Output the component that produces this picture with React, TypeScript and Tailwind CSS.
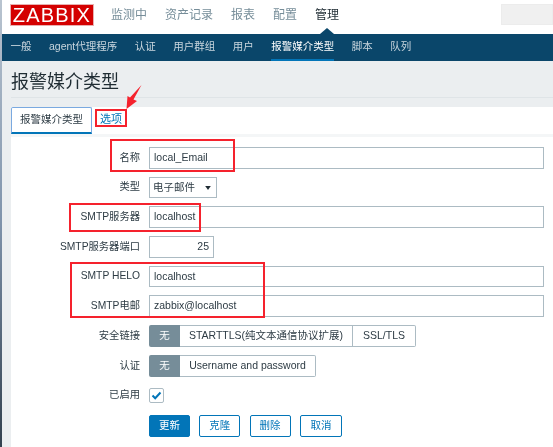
const cjk = "font-['Liberation_Sans','Noto_Sans_CJK_SC',sans-serif]";

function Row({ label, children, className = "" }: { label: string; children: React.ReactNode; className?: string }) {
  return (
    <div className={`flex items-center gap-[9px] h-[21.7px] ${className}`}>
      <div className="w-[129px] text-right text-[10.3px] leading-none text-[#2d3b44] whitespace-nowrap">{label}</div>
      {children}
    </div>
  );
}

function Field({ value, w = "flex-1", right = false }: { value: string; w?: string; right?: boolean }) {
  return (
    <div className={`h-full ${w} border border-[#acbbc3] bg-white flex items-center px-[4px] text-[10.5px] text-[#2d3b44] ${right ? "justify-end" : ""}`}>
      {value}
    </div>
  );
}

function Segments({ items }: { items: { t: string; w: string }[] }) {
  return (
    <div className="h-full flex">
      <div className="w-[31px] h-full bg-[#768d99] text-white text-[10.5px] flex items-center justify-center rounded-l-[2px]">无</div>
      {items.map((i) => (
        <div key={i.t} className={`${i.w} h-full border border-l-0 border-[#acbbc3] last:rounded-r-[2px] text-[10.5px] text-[#2d3b44] flex items-center justify-center whitespace-nowrap`}>
          {i.t}
        </div>
      ))}
    </div>
  );
}

function Btn({ t, w }: { t: string; w: string }) {
  return (
    <div className={`${w} h-full border border-[#0275b8] rounded-[2px] text-[#0275b8] text-[10.5px] flex items-center justify-center`}>{t}</div>
  );
}

export default function App() {
  const menu = [
    { t: "监测中" },
    { t: "资产记录" },
    { t: "报表" },
    { t: "配置" },
    { t: "管理", on: true },
  ];
  const nav = ["一般", "agent代理程序", "认证", "用户群组", "用户", "报警媒介类型", "脚本", "队列"];
  return (
    <div className={`relative w-[553px] h-[447px] overflow-hidden flex bg-white blur-[0.4px] ${cjk}`}>
      <div className="w-[2px] h-full shrink-0 bg-gradient-to-b from-[#b9c4d0] via-[#7f93ab] to-[#33414f]" />
      <div className="flex-1 min-w-0 flex flex-col bg-[#ebeef0]">
        {/* top bar */}
        <div className="h-[34px] bg-white flex relative shrink-0">
          <div className="ml-[8px] mt-[4px] w-[84px] h-[22px] bg-[#d40000] border border-[#e8b0b0] flex items-center justify-center text-white text-[20px] leading-none tracking-[1.2px] font-['Liberation_Sans',sans-serif]">
            ZABBIX
          </div>
          <div className="ml-[17px] mt-[8px] flex gap-[18px] h-[14px] text-[12px] leading-[14px]">
            {menu.map((m) => (
              <span key={m.t} className={m.on ? "text-[#1f2c33]" : "text-[#768d99]"}>{m.t}</span>
            ))}
          </div>
          <div className="absolute left-[499px] top-[4px] right-0 h-[21px] bg-[#f0f0f0] border border-[#ececec]" />
          <div className="absolute left-[318px] top-[28px] w-0 h-0 border-l-[7px] border-r-[7px] border-b-[6px] border-l-transparent border-r-transparent border-b-[#0a466a]" />
        </div>
        {/* sub nav */}
        <div className="h-[27px] bg-[#0a466a] shrink-0 flex pl-[8.500px] gap-[17.500px] text-[10.5px]">
          {nav.map((n, i) => (
            <div key={n} className={`h-full flex items-center whitespace-nowrap border-b-2 ${i === 5 ? "border-[#0275b8] text-white" : "border-transparent text-[#c9d6de]"}`}>
              {n}
            </div>
          ))}
        </div>
        {/* title */}
        <div className="mx-[9px] mr-0 h-[37px] shrink-0 border-b border-[#dfe4e7] flex items-center pt-[5px]">
          <h1 className="text-[18px] leading-none text-[#1f2c33] font-normal">报警媒介类型</h1>
        </div>
        {/* card */}
        <div className="ml-[9px] mt-[9px] flex-1 bg-white flex flex-col min-h-0">
          <div className="h-[27px] flex shrink-0">
            <div className="w-[81px] h-full rounded-t-[2px] border border-[#7aa9e0] border-b-2 border-b-[#0275b8] flex items-center justify-center text-[10.5px] text-[#2d3b44]">报警媒介类型</div>
            <div className="pl-[8px] h-[20px] mt-[2px] flex items-center text-[11px] text-[#0275b8]">选项</div>
          </div>
          <div className="h-[3px] bg-[#f4f6f7] shrink-0" />
          <div className="pt-[10px] pr-[9px] flex flex-col gap-[8px]">
            <Row label="名称"><Field value="local_Email" /></Row>
            <Row label="类型">
              <div className="h-full w-[68px] border border-[#acbbc3] flex items-center justify-between pl-[3px] pr-[5px] text-[10.5px] text-[#2d3b44]">
                电子邮件
                <svg width="6" height="4" viewBox="0 0 7 5"><path d="M0 0h7L3.500 5z" fill="#1f2c33" /></svg>
              </div>
            </Row>
            <Row label="SMTP服务器"><Field value="localhost" /></Row>
            <Row label="SMTP服务器端口"><Field value="25" w="w-[65px]" right /></Row>
            <Row label="SMTP HELO"><Field value="localhost" /></Row>
            <Row label="SMTP电邮"><Field value="zabbix@localhost" /></Row>
            <Row label="安全链接">
              <Segments items={[{ t: "STARTTLS(纯文本通信协议扩展)", w: "w-[173px]" }, { t: "SSL/TLS", w: "w-[63px]" }]} />
            </Row>
            <Row label="认证">
              <Segments items={[{ t: "Username and password", w: "w-[136px]" }]} />
            </Row>
            <Row label="已启用">
              <div className="w-[15px] h-[15px] border border-[#acbbc3] rounded-[2px] flex items-center justify-center">
                <svg width="11" height="9" viewBox="0 0 11 9" fill="none"><path d="M1.500 4.500 4.200 7.200 9.500 1.500" stroke="#0275b8" strokeWidth="2" /></svg>
              </div>
            </Row>
            <div className="flex h-[21.7px] ml-[138px] gap-[9.300px] mt-[1px]">
              <div className="w-[41px] h-full bg-[#0275b8] border border-[#0275b8] rounded-[2px] text-white text-[10.5px] flex items-center justify-center">更新</div>
              <Btn t="克隆" w="w-[41px]" />
              <Btn t="删除" w="w-[41px]" />
              <Btn t="取消" w="w-[42px]" />
            </div>
          </div>
        </div>
      </div>
      {/* red annotations drawn over the screenshot */}
      <div className="absolute left-[95px] top-[109px] w-[32px] h-[18px] border-2 border-[#f5222d]" />
      <div className="absolute left-[110px] top-[139px] w-[125px] h-[33px] border-2 border-[#f5222d]" />
      <div className="absolute left-[69px] top-[203px] w-[132px] h-[29px] border-2 border-[#f5222d]" />
      <div className="absolute left-[70px] top-[262px] w-[195px] h-[56px] border-2 border-[#f5222d]" />
      <svg className="absolute left-[124px] top-[84px]" width="20" height="28" viewBox="124 84 20 28">
        <path d="M141.500 85 L130 97.500 L127.500 96 L126.500 109 L137 101 L133.500 99.500 Z" fill="#f5222d" />
      </svg>
    </div>
  );
}
